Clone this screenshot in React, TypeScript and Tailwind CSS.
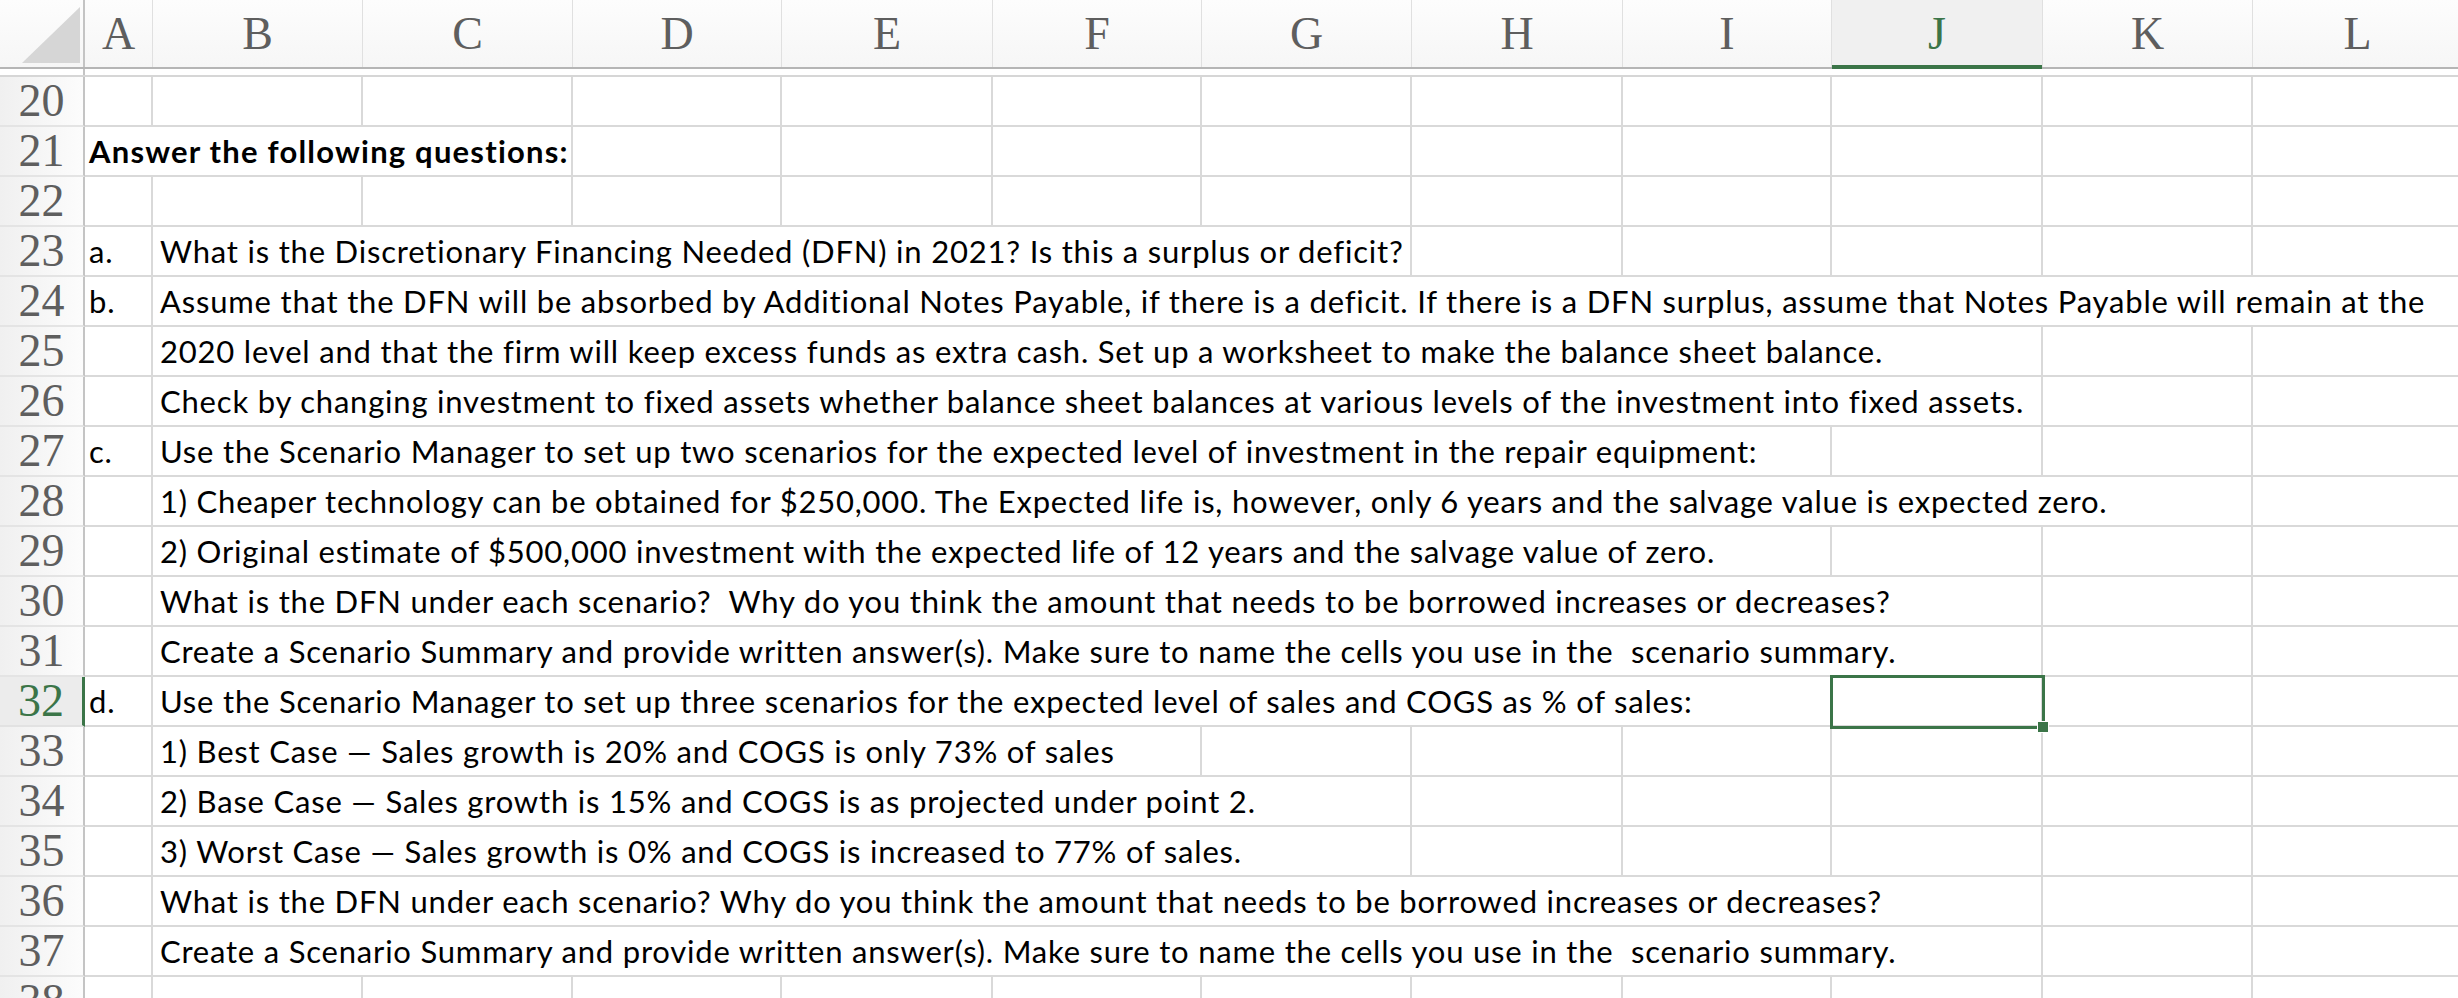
import { type ReactNode } from "react";

const COLUMNS = ["A", "B", "C", "D", "E", "F", "G", "H", "I", "J", "K", "L"];
const GRID = "grid grid-cols-[85px_68px_210px_210px_209px_211px_209px_210px_211px_209px_211px_210px_210px]";
const SELECTED_ROW = 32;
const SELECTED_COL = 9;

const SPAN: Record<number, string> = {
  3: "col-span-3",
  5: "col-span-5",
  6: "col-span-6",
  8: "col-span-8",
  9: "col-span-9",
  10: "col-span-10",
  11: "col-span-11",
};

type SheetRow = { n: number; label?: string; text?: string; span?: number; bold?: boolean };

const ROWS: SheetRow[] = [
  { n: 20 },
  { n: 21, text: "Answer the following questions:", span: 3, bold: true },
  { n: 22 },
  { n: 23, label: "a.", text: "What is the Discretionary Financing Needed (DFN) in 2021? Is this a surplus or deficit?", span: 6 },
  {
    n: 24,
    label: "b.",
    text: "Assume that the DFN will be absorbed by Additional Notes Payable, if there is a deficit. If there is a DFN surplus, assume that Notes Payable will remain at the",
    span: 11,
  },
  { n: 25, text: "2020 level and that the firm will keep excess funds as extra cash. Set up a worksheet to make the balance sheet balance.", span: 9 },
  { n: 26, text: "Check by changing investment to fixed assets whether balance sheet balances at various levels of the investment into fixed assets.", span: 9 },
  { n: 27, label: "c.", text: "Use the Scenario Manager to set up two scenarios for the expected level of investment in the repair equipment:", span: 8 },
  {
    n: 28,
    text: "1) Cheaper technology can be obtained for $250,000. The Expected life is, however, only 6 years and the salvage value is expected zero.",
    span: 10,
  },
  { n: 29, text: "2) Original estimate of $500,000 investment with the expected life of 12 years and the salvage value of zero.", span: 8 },
  { n: 30, text: "What is the DFN under each scenario?  Why do you think the amount that needs to be borrowed increases or decreases?", span: 9 },
  { n: 31, text: "Create a Scenario Summary and provide written answer(s). Make sure to name the cells you use in the  scenario summary.", span: 9 },
  { n: 32, label: "d.", text: "Use the Scenario Manager to set up three scenarios for the expected level of sales and COGS as % of sales:", span: 8 },
  { n: 33, text: "1) Best Case — Sales growth is 20% and COGS is only 73% of sales", span: 5 },
  { n: 34, text: "2) Base Case — Sales growth is 15% and COGS is as projected under point 2.", span: 6 },
  { n: 35, text: "3) Worst Case — Sales growth is 0% and COGS is increased to 77% of sales.", span: 6 },
  { n: 36, text: "What is the DFN under each scenario? Why do you think the amount that needs to be borrowed increases or decreases?", span: 9 },
  { n: 37, text: "Create a Scenario Summary and provide written answer(s). Make sure to name the cells you use in the  scenario summary.", span: 9 },
  { n: 38 },
];

const cellBase = "h-[50px] border-r-2 border-b-2 border-[#d9d9d9]";

function EmptyCell({ selected }: { selected?: boolean }) {
  return (
    <div className={`${cellBase} relative`}>
      {selected ? (
        <div className="absolute left-[-2px] top-[-2px] right-[-4px] bottom-[-4px] z-10 border-[3px] border-[#3b7548]">
          <div className="absolute right-[-7px] bottom-[-7px] h-[12px] w-[12px] border border-white bg-[#3b7548]" />
        </div>
      ) : null}
    </div>
  );
}

function RowHeader({ n }: { n: number }) {
  const active = n === SELECTED_ROW;
  return (
    <div
      className={
        active
          ? "flex h-[50px] items-center justify-center border-r-[3px] border-b-2 border-r-[#3b7548] border-b-[#e2e2e2] bg-[#ececec] font-['Liberation_Serif',serif] text-[46px] leading-none text-[#3b7548]"
          : "flex h-[50px] items-center justify-center border-r-2 border-b-2 border-r-[#c4c4c4] border-b-[#e4e4e4] bg-linear-to-r from-[#f0f0f0] to-[#fcfcfc] font-['Liberation_Serif',serif] text-[46px] leading-none text-[#5e5e5e]"
      }
    >
      {n}
    </div>
  );
}

function Row({ row }: { row: SheetRow }) {
  const cells: ReactNode[] = [];
  let col = 0;

  if (row.bold && row.text) {
    cells.push(
      <div key="t" className={`${cellBase} ${SPAN[row.span ?? 1]} flex items-center whitespace-pre pl-[4px] font-bold tracking-[1.2px]`}>
        {row.text}
      </div>
    );
    col = row.span ?? 1;
  } else {
    cells.push(
      <div key="a" className={`${cellBase} flex items-center pl-[4px] tracking-[0.8px]`}>
        {row.label ?? ""}
      </div>
    );
    col = 1;
    if (row.text) {
      cells.push(
        <div key="t" className={`${cellBase} ${SPAN[row.span ?? 1]} flex items-center whitespace-pre pl-[7px] tracking-[0.8px]`}>
          {row.text}
        </div>
      );
      col += row.span ?? 1;
    }
  }

  for (; col < COLUMNS.length; col++) {
    cells.push(<EmptyCell key={col} selected={row.n === SELECTED_ROW && col === SELECTED_COL} />);
  }

  return (
    <div className={GRID}>
      <RowHeader n={row.n} />
      {cells}
    </div>
  );
}

function ColumnHeader() {
  return (
    <div className={`${GRID} h-[69px] border-b-2 border-[#b5b5b5] bg-linear-to-b from-[#fdfdfd] to-[#f6f6f6]`}>
      <div className="relative border-r-2 border-[#c4c4c4]">
        <svg className="absolute left-0 top-0" width="83" height="67" viewBox="0 0 83 67">
          <polygon points="22,63 80,63 80,7" fill="#d6d6d6" />
        </svg>
      </div>
      {COLUMNS.map((c, i) => (
        <div
          key={c}
          className={
            i === SELECTED_COL
              ? "relative flex items-center justify-center border-r border-[#e0e0e0] bg-[#f0f0f0] font-['Liberation_Serif',serif] text-[46px] leading-none text-[#3b7548]"
              : "flex items-center justify-center border-r border-[#e0e0e0] font-['Liberation_Serif',serif] text-[46px] leading-none text-[#5e5e5e]"
          }
        >
          {c}
          {i === SELECTED_COL ? <div className="absolute bottom-[-2px] left-0 right-0 h-[4px] bg-[#3b7548]" /> : null}
        </div>
      ))}
    </div>
  );
}

export default function App() {
  return (
    <div className="h-[998px] w-[2458px] overflow-hidden bg-white font-['Lato','Noto_Sans',sans-serif] text-[31px] text-black [font-variant-ligatures:none]">
      <ColumnHeader />
      <div className="flex h-[8px] border-b-2 border-[#d6d6d6]">
        <div className="w-[85px] border-r-2 border-[#c4c4c4]" />
      </div>
      {ROWS.map((row) => (
        <Row key={row.n} row={row} />
      ))}
    </div>
  );
}
